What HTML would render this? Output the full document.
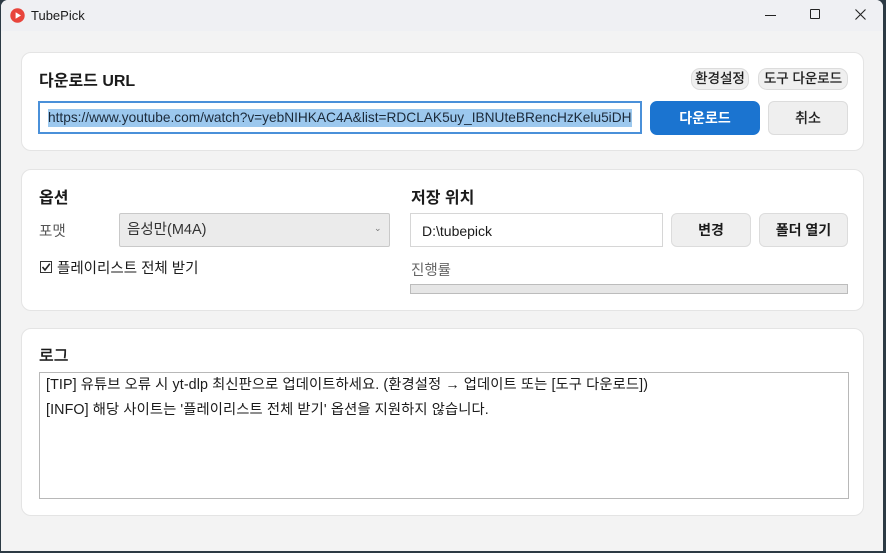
<!DOCTYPE html>
<html><head><meta charset="utf-8"><style>
*{box-sizing:border-box;margin:0;padding:0}
body{width:886px;height:553px;background:#2c3a44;position:relative;overflow:hidden;font-family:"Liberation Sans","Noto Sans CJK KR",sans-serif;color:#1b1b1b}
.win{position:absolute;left:1px;top:0;width:882px;height:551px;background:#f3f3f3;border-radius:7px 7px 0 0;overflow:hidden}
.tb{position:absolute;left:0;top:0;width:100%;height:31px;background:#eff0f3}
.a{position:absolute}
.card{position:absolute;background:#fff;border:1px solid #e4e4e4;border-radius:10px}
.h{font-size:16px;font-weight:bold;color:#1b1b1b}
.btn{position:absolute;background:#efefef;border:1px solid #dcdcdc;border-radius:6px;font-size:14px;font-weight:bold;text-align:center;color:#1b1b1b}
.inp{position:absolute;background:#fff;border:1px solid #d6d6d6;font-size:14px}
</style></head><body>
<div class="win">
<div class="tb">
<svg class="a" style="left:9px;top:8px" width="15" height="15" viewBox="0 0 15 15"><circle cx="7.5" cy="7.5" r="7.2" fill="#e8453c"/><path d="M5.6 4.3L11 7.5 5.6 10.7Z" fill="#fff"/></svg>
<div class="a" style="left:30px;top:8px;font-size:13px;color:#1b1b1b">TubePick</div>
<div class="a" style="left:764px;top:15px;width:11px;height:1px;background:#222"></div>
<div class="a" style="left:809px;top:9px;width:10px;height:10px;border:1px solid #222;border-radius:1px"></div>
<svg class="a" style="left:854px;top:9px" width="11" height="11"><path d="M0.5 0.5L10.5 10.5M10.5 0.5L0.5 10.5" stroke="#222" stroke-width="1.1"/></svg>
</div>

<div class="card" style="left:20px;top:52px;width:843px;height:99px">
<div class="a h" style="left:17px;top:14px">다운로드 URL</div>
<div class="btn" style="left:669px;top:15px;width:58px;height:22px;border-radius:9px;font-size:13.5px;line-height:20px;font-weight:normal;-webkit-text-stroke:0.3px #1b1b1b">환경설정</div>
<div class="btn" style="left:736px;top:15px;width:90px;height:22px;border-radius:9px;font-size:13.5px;line-height:20px;font-weight:normal;-webkit-text-stroke:0.3px #1b1b1b">도구 다운로드</div>
<div class="inp" style="left:16px;top:48px;width:604px;height:33px;border:2px solid #4a90d9;overflow:hidden;white-space:nowrap">
<span class="a" style="left:8px;top:6px;background:#9cc8ee;color:#1b2a3a;line-height:18px;font-size:13.7px">https://www.youtube.com/watch?v=yebNIHKAC4A&amp;list=RDCLAK5uy_IBNUteBRencHzKelu5iDH</span></div>
<div class="btn" style="left:628px;top:48px;width:110px;height:34px;background:#1b74d0;border-color:#1b74d0;color:#fff;line-height:32px;border-radius:7px">다운로드</div>
<div class="btn" style="left:746px;top:48px;width:80px;height:34px;line-height:32px;font-weight:normal;-webkit-text-stroke:0.3px #1b1b1b">취소</div>
</div>

<div class="card" style="left:20px;top:169px;width:843px;height:142px">
<div class="a h" style="left:17px;top:14px">옵션</div>
<div class="a" style="left:17px;top:50px;font-size:14.5px;color:#555">포맷</div>
<div class="a" style="left:97px;top:43px;width:271px;height:34px;background:#ebebeb;border:1px solid #c9c9c9;border-radius:2px">
<div class="a" style="left:7px;top:4px;font-size:14.5px;color:#333">음성만(M4A)</div>
<div class="a" style="left:254px;top:9px;font-size:9px;color:#777">⌄</div></div>
<div class="a" style="left:18px;top:91px;width:12px;height:12px;border:1px solid #333;background:#fff"><svg width="10" height="10" style="position:absolute;left:0;top:0"><path d="M1.5 5L4 8 8.8 1.8" stroke="#222" stroke-width="1.6" fill="none"/></svg></div>
<div class="a" style="left:35px;top:87px;font-size:14.5px">플레이리스트 전체 받기</div>
<div class="a h" style="left:389px;top:14px">저장 위치</div>
<div class="inp" style="left:388px;top:43px;width:253px;height:34px;padding:9px 11px">D:\tubepick</div>
<div class="btn" style="left:649px;top:43px;width:80px;height:34px;line-height:32px">변경</div>
<div class="btn" style="left:737px;top:43px;width:89px;height:34px;line-height:32px">폴더 열기</div>
<div class="a" style="left:389px;top:89px;font-size:14.5px;color:#666">진행률</div>
<div class="a" style="left:388px;top:114px;width:438px;height:10px;background:#e6e6e6;border:1px solid #bcbcbc"></div>
</div>

<div class="card" style="left:20px;top:328px;width:843px;height:188px">
<div class="a h" style="left:17px;top:13px;font-weight:normal;-webkit-text-stroke:0.4px #1b1b1b">로그</div>
<div class="a" style="left:17px;top:43px;width:810px;height:127px;border:1px solid #b8b8b8;background:#fff;font-size:14.3px;line-height:25px;padding:0 6px;color:#1b1b1b;letter-spacing:0.1px">
[TIP] 유튜브 오류 시 yt-dlp 최신판으로 업데이트하세요. (환경설정 → 업데이트 또는 [도구 다운로드])<br>
[INFO] 해당 사이트는 '플레이리스트 전체 받기' 옵션을 지원하지 않습니다.</div>
</div>
</div>
</body></html>
